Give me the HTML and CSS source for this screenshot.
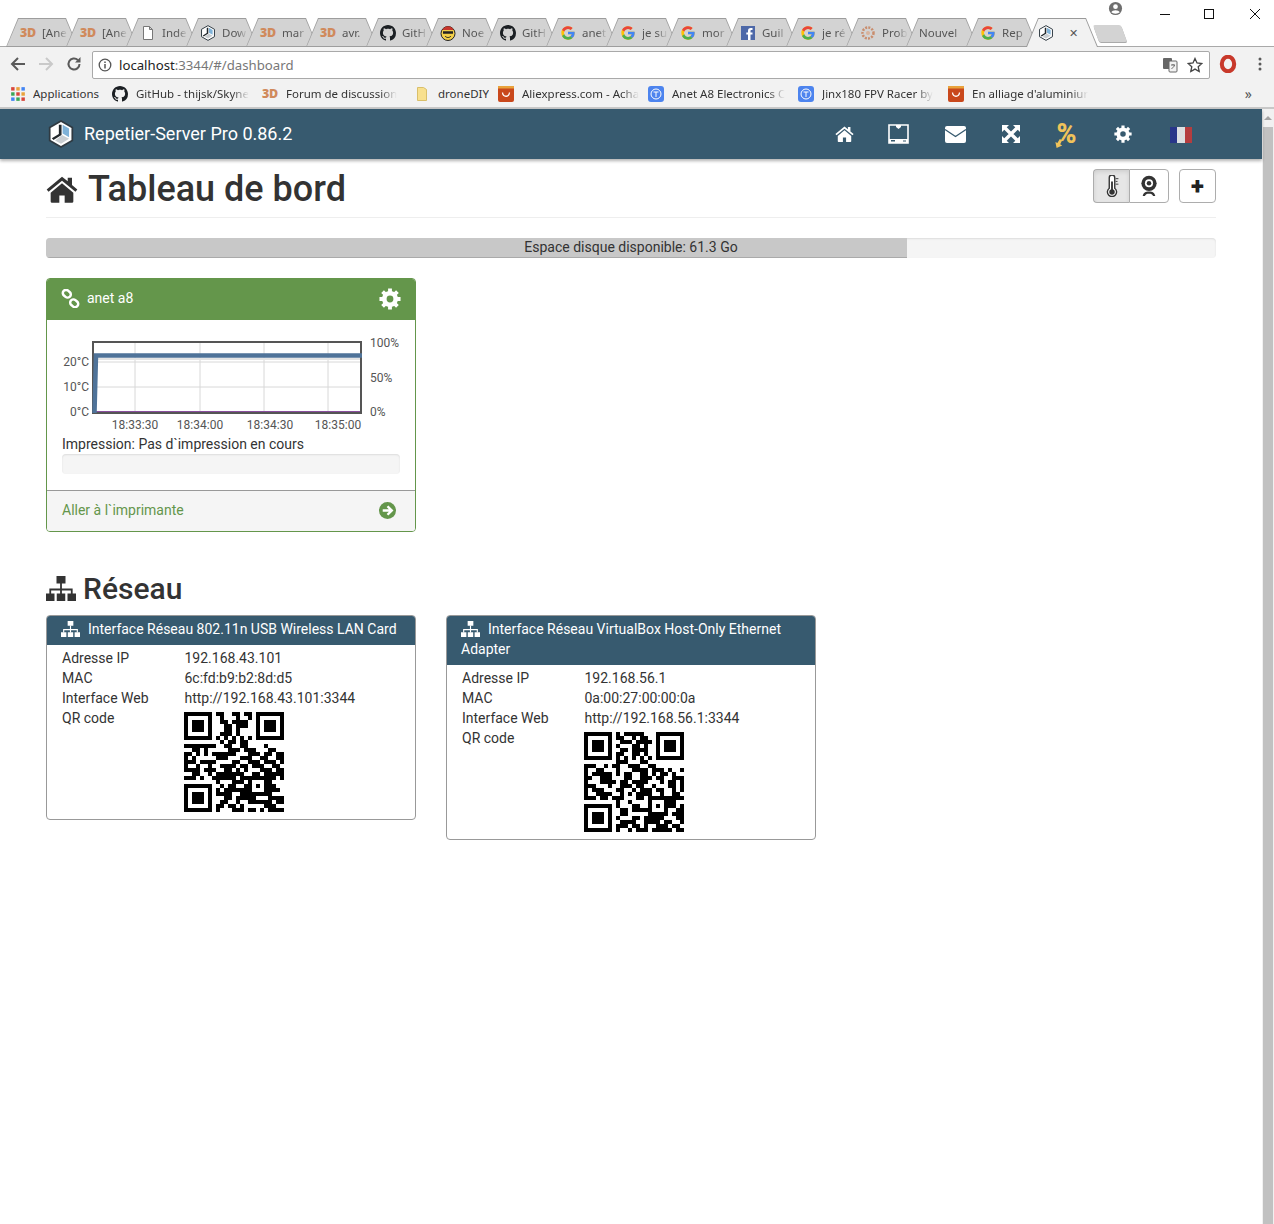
FILE: index.html
```html
<!DOCTYPE html>
<html lang="fr">
<head>
<meta charset="utf-8">
<title>Repetier-Server Pro</title>
<link rel="stylesheet" href="styles.css">
</head>
<body>
<svg class="defs" aria-hidden="true">
  <symbol id="g" viewBox="0 0 48 48">
    <path fill="#FFC107" d="M43.6 20.5H42V20H24v8h11.3C33.7 32.7 29.2 36 24 36c-6.6 0-12-5.4-12-12s5.4-12 12-12c3.1 0 5.8 1.2 8 3l5.7-5.7C34 6.1 29.3 4 24 4 13 4 4 13 4 24s9 20 20 20 20-9 20-20c0-1.2-.1-2.4-.4-3.5z"/>
    <path fill="#E8453C" d="M6.3 14.7l6.6 4.8C14.7 15.1 19 12 24 12c3.1 0 5.8 1.2 8 3l5.7-5.7C34 6.1 29.3 4 24 4 16.3 4 9.7 8.3 6.3 14.7z"/>
    <path fill="#4CAF50" d="M24 44c5.2 0 9.9-2 13.4-5.2l-6.2-5.2C29.2 35.1 26.7 36 24 36c-5.2 0-9.6-3.3-11.3-7.9l-6.5 5C9.5 39.6 16.2 44 24 44z"/>
    <path fill="#4285F4" d="M43.6 20.5H42V20H24v8h11.3c-.8 2.2-2.2 4.2-4.1 5.6l6.2 5.2C37 39.2 44 34 44 24c0-1.2-.1-2.4-.4-3.5z"/>
  </symbol>
  <symbol id="gh" viewBox="0 0 16 16">
    <path fill="#1b1f23" d="M8 0C3.58 0 0 3.58 0 8c0 3.54 2.29 6.53 5.47 7.59.4.07.55-.17.55-.38 0-.19-.01-.82-.01-1.49-2.01.37-2.53-.49-2.69-.94-.09-.23-.48-.94-.82-1.13-.28-.15-.68-.52-.01-.53.63-.01 1.08.58 1.23.82.72 1.21 1.87.87 2.33.66.07-.52.28-.87.51-1.07-1.78-.2-3.64-.89-3.64-3.95 0-.87.31-1.59.82-2.15-.08-.2-.36-1.02.08-2.12 0 0 .67-.21 2.2.82.64-.18 1.32-.27 2-.27.68 0 1.36.09 2 .27 1.53-1.04 2.2-.82 2.2-.82.44 1.1.16 1.92.08 2.12.51.56.82 1.27.82 2.15 0 3.07-1.87 3.75-3.65 3.95.29.25.54.73.54 1.48 0 1.07-.01 1.93-.01 2.2 0 .21.15.46.55.38A8.013 8.013 0 0016 8c0-4.42-3.58-8-8-8z"/>
  </symbol>
  <symbol id="repetier" viewBox="0 0 24 26">
    <path fill="#fff" stroke="#2f3a42" stroke-width="1.6" d="M12 1l10.5 6v12L12 25 1.5 19V7z"/>
    <path fill="#22282c" d="M10 4.5h2.5V14l-7.500 4.500-1.500-1.500L10 13z"/>
    <path fill="#7fb2d8" d="M13.500 4.500l6 3.500v8l-6-3.500z"/>
    <path fill="#c9ced2" d="M13 14l6.500 3.500L12 22l-5.500-3z"/>
  </symbol>
  <symbol id="cog" viewBox="0 0 24 24">
    <circle cx="12" cy="12" r="6.200" fill="none" stroke="currentColor" stroke-width="5"/>
    <path fill="none" stroke="currentColor" stroke-width="4.200" d="M12 .5v4M12 19.500v4M.5 12h4M19.500 12h4M3.900 3.900l2.800 2.800M17.300 17.300l2.800 2.800M3.900 20.100l2.800-2.800M17.300 6.700l2.800-2.800"/>
  </symbol>
  <symbol id="home" viewBox="0 0 24 20">
    <path fill="currentColor" d="M12 .5L.5 10l1.400 1.700L12 3.400l10.100 8.300 1.400-1.700-4-3.300V1.200h-3.200v2.700z"/>
    <path fill="currentColor" d="M12 5.400l-8.500 7V19a1 1 0 0 0 1 1H10v-5.500h4V20h5.500a1 1 0 0 0 1-1v-6.600z"/>
  </symbol>
  <symbol id="sitemap" viewBox="0 0 30 25">
    <path fill="currentColor" d="M10.500 0h9v7.500h-9zM0 17.500h8.500V25H0zM10.750 17.500h8.500V25h-8.500zM21.500 17.500H30V25h-8.500z"/>
    <path fill="none" stroke="currentColor" stroke-width="1.800" d="M15 7v11M4.250 18v-4.500h21.500V18"/>
  </symbol>
  <symbol id="t" viewBox="0 0 16 16">
    <rect width="16" height="16" rx="3" fill="#4d84ee"/>
    <circle cx="8" cy="8" r="5" fill="none" stroke="#fff"/>
    <path fill="none" stroke="#fff" d="M5.500 6h5M8 6v5"/>
  </symbol>
  <symbol id="ali" viewBox="0 0 16 16">
    <rect width="16" height="16" rx="2" fill="#c9481c"/>
    <rect width="16" height="2.500" fill="#e9a23b"/>
    <path fill="none" stroke="#fff" stroke-width="1.300" d="M4.500 6.500c.5 5 6.500 5 7 0"/>
  </symbol>
</svg>

<header class="chrome">
  <div class="tabstrip">
    <div class="tabs">
      <div class="tab"><span class="tab-inner"><span class="td">3D</span><span class="tab-text">[Ane</span></span></div>
      <div class="tab"><span class="tab-inner"><span class="td">3D</span><span class="tab-text">[Ane</span></span></div>
      <div class="tab"><span class="tab-inner"><svg class="fav" viewBox="0 0 16 16"><path fill="#fff" stroke="#777" d="M3.500 1.500h6l3 3v10h-9z M9.500 1.500v3h3"/></svg><span class="tab-text">Inde</span></span></div>
      <div class="tab"><span class="tab-inner"><svg class="fav"><use href="#repetier"/></svg><span class="tab-text">Dow</span></span></div>
      <div class="tab"><span class="tab-inner"><span class="td">3D</span><span class="tab-text">mar</span></span></div>
      <div class="tab"><span class="tab-inner"><span class="td">3D</span><span class="tab-text">avr.</span></span></div>
      <div class="tab"><span class="tab-inner"><svg class="fav"><use href="#gh"/></svg><span class="tab-text">GitH</span></span></div>
      <div class="tab"><span class="tab-inner"><svg class="fav" viewBox="0 0 16 16"><circle cx="8" cy="8.500" r="7" fill="#f2cf4a" stroke="#222"/><path fill="#c7352b" d="M2.500 5c2-5 9-5 11 0z"/><path stroke="#222" stroke-width="2.500" d="M3 7.500h10"/><path fill="none" stroke="#222" d="M5 11c1.500 2 4.500 2 6 0"/></svg><span class="tab-text">Noe</span></span></div>
      <div class="tab"><span class="tab-inner"><svg class="fav"><use href="#gh"/></svg><span class="tab-text">GitH</span></span></div>
      <div class="tab"><span class="tab-inner"><svg class="fav"><use href="#g"/></svg><span class="tab-text">anet</span></span></div>
      <div class="tab"><span class="tab-inner"><svg class="fav"><use href="#g"/></svg><span class="tab-text">je su</span></span></div>
      <div class="tab"><span class="tab-inner"><svg class="fav"><use href="#g"/></svg><span class="tab-text">mor</span></span></div>
      <div class="tab"><span class="tab-inner"><svg class="fav" viewBox="0 0 16 16"><rect x="1" y="1" width="14" height="14" fill="#4d68a8"/><path fill="#fff" d="M10.500 15V9.500h2V7.500h-2V6c0-.7.3-1 1-1h1V3h-1.500C8.700 3 8 4.200 8 5.700v1.800H6.300v2H8V15z"/></svg><span class="tab-text">Guil</span></span></div>
      <div class="tab"><span class="tab-inner"><svg class="fav"><use href="#g"/></svg><span class="tab-text">je ré</span></span></div>
      <div class="tab"><span class="tab-inner"><svg class="fav" viewBox="0 0 16 16"><circle cx="8" cy="8" r="5.500" fill="none" stroke="#c98d6d" stroke-width="2.500" stroke-dasharray="2 1.200"/><circle cx="8" cy="8" r="2" fill="#d9b39c"/></svg><span class="tab-text">Prob</span></span></div>
      <div class="tab"><span class="tab-inner tab-inner-plain"><span class="tab-text tab-text-wide">Nouvel</span></span></div>
      <div class="tab"><span class="tab-inner"><svg class="fav"><use href="#g"/></svg><span class="tab-text">Rep</span></span></div>
      <div class="tab tab-active"><span class="tab-inner"><svg class="fav"><use href="#repetier"/></svg><span class="tab-close">✕</span></span></div>
    </div>
    <div class="newtab"></div>
    <svg class="profile" viewBox="0 0 16 16"><circle cx="8" cy="8" r="7" fill="#6e6e6e"/><circle cx="8" cy="6" r="2.500" fill="#fff"/><path fill="#fff" d="M3.500 12c1-3 8-3 9 0-2 2-7 2-9 0z"/></svg>
    <div class="winctl">
      <svg class="winbtn" viewBox="0 0 10 10"><path stroke="#111" d="M0 5.500h10"/></svg>
      <svg class="winbtn" viewBox="0 0 10 10"><rect x=".5" y=".5" width="9" height="9" fill="none" stroke="#111"/></svg>
      <svg class="winbtn winbtn-close" viewBox="0 0 10 10"><path stroke="#111" d="M0 0l10 10M10 0L0 10"/></svg>
    </div>
  </div>
  <div class="toolbar">
    <svg class="tool" viewBox="0 0 16 16"><path fill="none" stroke="#5a5a5a" stroke-width="2" d="M15 8H2.500M8 2L2 8l6 6"/></svg>
    <svg class="tool" viewBox="0 0 16 16"><path fill="none" stroke="#c9c9c9" stroke-width="2" d="M1 8h12.500M8 2l6 6-6 6"/></svg>
    <svg class="tool" viewBox="0 0 16 16"><path fill="none" stroke="#5a5a5a" stroke-width="2" d="M13.500 8a5.500 5.500 0 1 1-1.700-4"/><path fill="#5a5a5a" d="M14.500 1v5.500H9z"/></svg>
    <div class="omnibox">
      <svg class="info" viewBox="0 0 14 14"><circle cx="7" cy="7" r="5.800" fill="none" stroke="#555" stroke-width="1.300"/><path stroke="#555" stroke-width="1.500" d="M7 6v4.500M7 3.500v1.500"/></svg>
      <span class="url">localhost<span class="url-path">:3344/#/dashboard</span></span>
      <svg class="translate" viewBox="0 0 16 16"><rect x="1" y="1" width="9" height="11" rx="1" fill="#666"/><rect x="7" y="4" width="8" height="11" rx="1" fill="#f2f2f2" stroke="#666"/><path stroke="#666" fill="none" d="M9 8h4M11 7v1M12.500 8c-.4 2-1.800 3-3 3.500"/></svg>
      <svg class="star" viewBox="0 0 16 16"><path fill="none" stroke="#444" stroke-width="1.300" d="M8 1.500l2 4.500 4.800.5-3.600 3.200 1 4.800L8 12.100 3.800 14.500l1-4.800L1.200 6.500 6 6z"/></svg>
    </div>
    <svg class="opera" viewBox="0 0 16 16"><ellipse cx="8" cy="8" rx="5.500" ry="6.500" fill="none" stroke="#c8392b" stroke-width="3.600"/></svg>
    <svg class="menu" viewBox="0 0 4 16"><circle cx="2" cy="3" r="1.500" fill="#5a5a5a"/><circle cx="2" cy="8" r="1.500" fill="#5a5a5a"/><circle cx="2" cy="13" r="1.500" fill="#5a5a5a"/></svg>
  </div>
  <div class="bookmarks">
    <div class="bm bm-apps"><svg class="fav" viewBox="0 0 14 14"><path fill="#d9453a" d="M1 1h3v3H1z"/><path fill="#e9a23b" d="M5.500 1h3v3h-3z"/><path fill="#4285f4" d="M10 1h3v3h-3z"/><path fill="#3aa757" d="M1 5.500h3v3H1z"/><path fill="#d9453a" d="M5.500 5.500h3v3h-3z"/><path fill="#e9a23b" d="M10 5.500h3v3h-3z"/><path fill="#4285f4" d="M1 10h3v3H1z"/><path fill="#3aa757" d="M5.500 10h3v3h-3z"/><path fill="#d9453a" d="M10 10h3v3h-3z"/></svg><span class="bm-text">Applications</span></div>
    <div class="bm"><svg class="fav"><use href="#gh"/></svg><span class="bm-text">GitHub - thijsk/Skyne</span></div>
    <div class="bm bm-3d"><span class="td">3D</span><span class="bm-text">Forum de discussion</span></div>
    <div class="bm bm-folder"><svg class="fav" viewBox="0 0 16 16"><path fill="#f8e08e" stroke="#d9bf6a" d="M3.500 1.500h6l3 2v11h-9z"/></svg><span class="bm-text">droneDIY</span></div>
    <div class="bm"><svg class="fav"><use href="#ali"/></svg><span class="bm-text">Aliexpress.com - Acha</span></div>
    <div class="bm"><svg class="fav"><use href="#t"/></svg><span class="bm-text">Anet A8 Electronics C</span></div>
    <div class="bm"><svg class="fav"><use href="#t"/></svg><span class="bm-text">Jinx180 FPV Racer by</span></div>
    <div class="bm"><svg class="fav"><use href="#ali"/></svg><span class="bm-text">En alliage d'aluminiur</span></div>
    <span class="bm-more">»</span>
  </div>
</header>

<div class="page">
  <div class="viewport">
    <nav class="navbar">
      <div class="brand"><svg class="brand-logo"><use href="#repetier"/></svg><span>Repetier-Server Pro 0.86.2</span></div>
      <ul class="navicons">
        <li><svg class="ic-home"><use href="#home"/></svg></li>
        <li><svg class="ic-printer" viewBox="0 0 21 20"><path fill="none" stroke="#fff" stroke-width="1.600" d="M1 1h19v18H1z"/><path fill="#fff" d="M8 1h5v2l-2.500 2L8 3zM1 15h19v4H1z"/><path fill="#375a6f" d="M3 16h4v1.500H3zM15 16.500h3v1h-3z"/></svg></li>
        <li><svg class="ic-mail" viewBox="0 0 21 17"><rect width="21" height="17" rx="2" fill="#fff"/><path fill="none" stroke="#375a6f" stroke-width="1.300" d="M0 3.500l10.500 7 10.500-7"/></svg></li>
        <li><svg class="ic-expand" viewBox="0 0 18 18"><path fill="#fff" d="M0 0h7L0 7zM18 0v7l-7-7zM0 18v-7l7 7zM18 18h-7l7-7z"/><path fill="none" stroke="#fff" stroke-width="3.400" d="M2.500 2.500l13 13M15.500 2.500l-13 13"/></svg></li>
        <li class="nav-percent">%<svg class="percent-arrow" viewBox="0 0 10 11"><path fill="#f0c35a" d="M6 0l3 1.500-2.500 5 2.500 1.500-7 3-1.500-7.500 2.500 1.500z"/></svg></li>
        <li><svg class="ic-cog"><use href="#cog"/></svg></li>
        <li><span class="flag"></span></li>
      </ul>
    </nav>
    <main class="content">
      <div class="pagehead">
        <h1><svg class="h1-icon"><use href="#home"/></svg>Tableau de bord</h1>
        <div class="head-actions">
          <div class="btn-group">
            <button class="btn btn-on"><svg class="btn-ic" viewBox="0 0 18 24"><path fill="#fff" stroke="#333" stroke-width="1.500" d="M6 3a3 3 0 0 1 6 0v11.500a5 5 0 1 1-6 0z"/><circle cx="9" cy="18.500" r="3" fill="#333"/><path stroke="#333" stroke-width="2" d="M9 7v11"/><path stroke="#333" d="M13 4h3M13 7h2M13 10h3"/></svg></button>
            <button class="btn"><svg class="btn-ic" viewBox="0 0 20 24"><circle cx="10" cy="9" r="8.500" fill="#333"/><circle cx="10" cy="9" r="4.500" fill="#fff"/><circle cx="10" cy="9" r="2.500" fill="#333"/><path fill="#333" d="M3 23c1-4 3-5 7-5s6 1 7 5h-2.500c-.7-2-2-2.500-4.500-2.500S6.200 21 5.500 23z"/></svg></button>
          </div>
          <button class="btn btn-plus">+</button>
        </div>
      </div>
      <div class="progress disk"><div class="progress-bar"></div><span class="progress-label">Espace disque disponible: 61.3 Go</span></div>

      <section class="printer card card-green">
        <div class="card-head green-head">
          <svg class="ic-link" viewBox="0 0 18 18"><g fill="none" stroke="#fff" stroke-width="2.400"><rect x="1.500" y="1.500" width="8" height="6" rx="3" transform="rotate(40 5.500 4.500)"/><rect x="8.500" y="10.500" width="8" height="6" rx="3" transform="rotate(40 12.500 13.500)"/></g></svg>
          <span class="printer-name">anet a8</span>
          <svg class="ic-cog-head"><use href="#cog"/></svg>
        </div>
        <div class="card-body">
          <svg class="chart" viewBox="0 0 338 100">
            <path class="grid" d="M73 8v72M138 8v72M202 8v72M266 8v72M31 29h269M31 54h269"/>
            <path class="line-shadow" d="M35 26h265"/>
            <path class="line-purple" d="M31 79h269"/>
            <rect class="plot" x="31" y="9" width="268" height="71"/>
            <path class="line-blue" d="M32.500 80L34 22.500H300"/>
            <text class="tick tick-end" x="27" y="33">20°C</text>
            <text class="tick tick-end" x="27" y="58">10°C</text>
            <text class="tick tick-end" x="27" y="83">0°C</text>
            <text class="tick" x="308" y="14">100%</text>
            <text class="tick" x="308" y="49">50%</text>
            <text class="tick" x="308" y="83">0%</text>
            <text class="tick tick-mid" x="73" y="96">18:33:30</text>
            <text class="tick tick-mid" x="138" y="96">18:34:00</text>
            <text class="tick tick-mid" x="208" y="96">18:34:30</text>
            <text class="tick tick-mid" x="276" y="96">18:35:00</text>
          </svg>
          <div class="print-state">Impression: Pas d`impression en cours</div>
          <div class="progress job"></div>
        </div>
        <div class="card-foot">
          <span>Aller à l`imprimante</span>
          <svg class="ic-go" viewBox="0 0 16 16"><circle cx="8" cy="8" r="8" fill="#64964b"/><path fill="none" stroke="#fff" stroke-width="2.300" d="M3.500 8h8M8 4l4 4-4 4"/></svg>
        </div>
      </section>

      <h2><svg class="h2-icon"><use href="#sitemap"/></svg>Réseau</h2>
      <div class="nets">
        <section class="card card-net">
          <div class="net-head"><svg class="net-ic"><use href="#sitemap"/></svg>Interface Réseau 802.11n USB Wireless LAN Card</div>
          <dl class="net-body">
            <dt>Adresse IP</dt><dd>192.168.43.101</dd>
            <dt>MAC</dt><dd>6c:fd:b9:b2:8d:d5</dd>
            <dt>Interface Web</dt><dd>http://192.168.43.101:3344</dd>
            <dt>QR code</dt>
            <dd><svg class="qr" viewBox="0 0 25 25" shape-rendering="crispEdges"><path stroke="#000" d="M0 .5h7m1 0h2m2 0h2m1 0h2m1 0h7M0 1.500h1m5 0h1m2 0h1m3 0h1m2 0h1m1 0h1m5 0h1M0 2.500h1m1 0h3m1 0h1m2 0h2m1 0h4m2 0h1m1 0h3m1 0h1M0 3.500h1m1 0h3m1 0h1m3 0h2m1 0h3m2 0h1m1 0h3m1 0h1M0 4.500h1m1 0h3m1 0h1m3 0h2m1 0h1m4 0h1m1 0h3m1 0h1M0 5.500h1m5 0h1m2 0h3m1 0h1m4 0h1m5 0h1M0 6.500h7m1 0h1m1 0h1m1 0h1m1 0h1m1 0h1m1 0h7M9 7.500h1m1 0h2m1 0h2M0 8.500h8m2 0h2m2 0h2m4 0h1M2 9.500h2m1 0h1m5 0h3m1 0h3m3 0h2M0 10.500h2m1 0h1m1 0h1m1 0h6m3 0h3m1 0h2m1 0h2M0 11.500h1m1 0h1m5 0h3m3 0h3m2 0h2m2 0h2M0 12.500h3m1 0h4m4 0h2m2 0h3m1 0h3m1 0h1M0 13.500h1m2 0h1m2 0h1m2 0h4m1 0h2m1 0h3m2 0h2M0 14.500h4m1 0h3m2 0h2m1 0h1m1 0h1m3 0h3m1 0h2M2 15.500h2m2 0h1m1 0h7m2 0h2m1 0h5M0 16.500h3m1 0h1m2 0h6m1 0h9m1 0h1M8 17.500h1m3 0h3m1 0h1m3 0h2M0 18.500h7m2 0h1m1 0h2m2 0h2m1 0h1m1 0h3M0 19.500h1m5 0h1m1 0h1m1 0h7m3 0h4M0 20.500h1m1 0h3m1 0h1m1 0h4m2 0h8M0 21.500h1m1 0h3m1 0h1m3 0h2m1 0h5m3 0h4M0 22.500h1m1 0h3m1 0h1m2 0h2m2 0h1m2 0h6m1 0h2M0 23.500h1m5 0h1m1 0h2m1 0h2m1 0h1m5 0h3M0 24.500h7m1 0h1m3 0h3m1 0h2m1 0h1m1 0h4"/></svg></dd>
          </dl>
        </section>
        <section class="card card-net">
          <div class="net-head"><svg class="net-ic"><use href="#sitemap"/></svg>Interface Réseau VirtualBox Host-Only Ethernet Adapter</div>
          <dl class="net-body">
            <dt>Adresse IP</dt><dd>192.168.56.1</dd>
            <dt>MAC</dt><dd>0a:00:27:00:00:0a</dd>
            <dt>Interface Web</dt><dd>http://192.168.56.1:3344</dd>
            <dt>QR code</dt>
            <dd><svg class="qr" viewBox="0 0 25 25" shape-rendering="crispEdges"><path stroke="#000" d="M0 .5h7m1 0h1m1 0h5m3 0h7M0 1.500h1m5 0h1m1 0h2m2 0h1m1 0h2m2 0h1m5 0h1M0 2.500h1m1 0h3m1 0h1m2 0h3m1 0h4m1 0h1m1 0h3m1 0h1M0 3.500h1m1 0h3m1 0h1m1 0h1m3 0h2m1 0h1m2 0h1m1 0h3m1 0h1M0 4.500h1m1 0h3m1 0h1m2 0h2m1 0h4m2 0h1m1 0h3m1 0h1M0 5.500h1m5 0h1m1 0h2m2 0h2m1 0h1m2 0h1m5 0h1M0 6.500h7m1 0h1m1 0h1m1 0h1m1 0h1m1 0h1m1 0h7M8 7.500h3m3 0h2M0 8.500h3m2 0h1m1 0h2m2 0h3m2 0h2M0 9.500h1m2 0h2m3 0h1m3 0h4m1 0h3m1 0h1m2 0h1M0 10.500h1m1 0h5m1 0h1m1 0h2m2 0h2m1 0h1m1 0h2m1 0h1m2 0h1M0 11.500h2m2 0h3m3 0h2m2 0h3m1 0h2m2 0h3M0 12.500h1m3 0h4m1 0h2m1 0h4m3 0h1m1 0h2m1 0h1M0 13.500h3m3 0h1m2 0h3m1 0h2m2 0h1m3 0h2m1 0h1M0 14.500h1m1 0h3m3 0h2m2 0h1m1 0h3m1 0h2m2 0h1m1 0h1M0 15.500h1m2 0h4m2 0h1m1 0h1m1 0h4m2 0h1m2 0h2M0 16.500h3m1 0h2m1 0h3m3 0h2m1 0h9M8 17.500h1m2 0h1m4 0h1m3 0h3M0 18.500h7m1 0h1m3 0h2m2 0h1m1 0h1m1 0h3m1 0h1M0 19.500h1m5 0h1m2 0h2m1 0h5m3 0h1m2 0h2M0 20.500h1m1 0h3m1 0h1m2 0h2m5 0h5m1 0h3M0 21.500h1m1 0h3m1 0h1m1 0h1m3 0h2m1 0h5m3 0h2M0 22.500h1m1 0h3m1 0h1m2 0h4m2 0h4m1 0h2m2 0h1M0 23.500h1m5 0h1m1 0h3m1 0h2m1 0h1m2 0h3m1 0h2M0 24.500h7m1 0h1m2 0h1m1 0h3m1 0h5m1 0h2"/></svg></dd>
          </dl>
        </section>
      </div>
    </main>
  </div>
  <div class="scrollbar"><span class="scroll-arrow"></span><div class="scroll-thumb"></div></div>
</div>
</body>
</html>
```

FILE: styles.css
```css
* { box-sizing: border-box; }
html, body { margin: 0; height: 1224px; overflow: hidden; }
body { background: #fff; color: #333; font-family: Roboto, sans-serif; font-size: 14px; line-height: 20px; }
.defs { display: none; }

/* browser chrome */
.chrome { height: 109px; font-family: "Noto Sans", "Open Sans", sans-serif; border-bottom: 2px solid #c8c8c8; background: #f2f2f2; }
.tabstrip { height: 47px; display: flex; background: #fff; padding-left: 6px; border-bottom: 1px solid #a9a9a9; }
.tabs { display: flex; align-self: flex-end; height: 29px; margin-bottom: -1px; }
.tab { width: 72px; height: 29px; margin-right: -12px; background: #9d9d9d; clip-path: polygon(0 100%, 12px 0, 60px 0, 72px 100%); position: relative; }
.tab-inner { position: absolute; inset: 1px 1px 1px 1px; background: #d3d3d3; clip-path: polygon(0 100%, 11.500px 0, 58.500px 0, 70px 100%); display: flex; align-items: center; padding: 0 0 0 13px; gap: 6px; color: #555; font-size: 11.500px; white-space: nowrap; }
.tab-inner-plain { padding-left: 12px; }
.tab-text { display: block; width: 27px; overflow: hidden; -webkit-mask-image: linear-gradient(90deg, #000 55%, transparent 95%); mask-image: linear-gradient(90deg, #000 55%, transparent 95%); }
.tab-text-wide { width: 44px; -webkit-mask-image: linear-gradient(90deg, #000 80%, transparent); mask-image: linear-gradient(90deg, #000 80%, transparent); }
.tab-active { background: #9a9a9a; z-index: 2; }
.tab-active .tab-inner { background: #f2f2f2; inset: 1px 1px 0 1px; padding-left: 11px; }
.tab-close { margin-left: 9px; font-size: 11px; color: #555; }
.fav { width: 16px; height: 16px; flex: none; display: block; }
.td { width: 16px; flex: none; font-family: "Open Sans", sans-serif; font-weight: 800; font-size: 12.500px; letter-spacing: -.3px; color: #d08a5c; }
.newtab { width: 28px; height: 17px; margin: 25px 0 0 10px; background: #d3d3d3; border-radius: 2px; transform: skewX(20deg); box-shadow: 0 1px 0 #aaa; }
.profile { width: 15px; height: 15px; margin: 1px 0 0 -16px; flex: none; }
.winctl { display: flex; margin-left: auto; padding: 9px 14px 0 0; gap: 34px; height: 20px; }
.winbtn { width: 10px; height: 10px; }
.winbtn-close { margin-left: 2px; }
.toolbar { height: 34px; display: flex; align-items: center; padding-left: 10px; background: #f2f2f2; }
.tool { width: 16px; height: 16px; margin-right: 12px; flex: none; }
.omnibox { width: 1118px; height: 28px; margin: 1px 0 0 -2px; display: flex; align-items: center; background: #fff; border: 1px solid #a9a9a9; border-radius: 2px; padding: 0 6px 0 5px; font-size: 13.200px; }
.info { width: 14px; height: 14px; margin-right: 7px; }
.url { color: #222; }
.url-path { color: #777; }
.translate { width: 16px; height: 16px; margin-left: auto; }
.star { width: 16px; height: 16px; margin-left: 9px; }
.opera { width: 18px; height: 18px; margin-left: 9px; flex: none; }
.menu { width: 4px; height: 16px; margin-left: 21px; flex: none; }
.bookmarks { height: 26px; display: flex; align-items: center; padding-left: 10px; font-size: 11.500px; color: #333; background: #f2f2f2; white-space: nowrap; position: relative; }
.bm { display: flex; align-items: center; gap: 8px; width: 150px; flex: none; }
.bm-apps { width: 102px; gap: 7px; }
.bm-3d { width: 152px; }
.bm-folder { width: 84px; }
.bm-text { display: block; overflow: hidden; max-width: 118px; -webkit-mask-image: linear-gradient(90deg, #000 85%, transparent); mask-image: linear-gradient(90deg, #000 85%, transparent); }
.bm-apps .bm-text, .bm-folder .bm-text { -webkit-mask-image: none; mask-image: none; }
.bm-more { position: absolute; right: 22px; top: 0; font-size: 14px; line-height: 26px; color: #555; }

/* page */
.page { display: flex; height: 1115px; }
.viewport { width: 1262px; flex: none; }
.scrollbar { width: 12px; background: #f1f1f1; flex: none; display: flex; flex-direction: column; align-items: center; }
.scroll-arrow { margin: 7px 0 4px; width: 0; height: 0; border: 4px solid transparent; border-top: 0; border-bottom-color: #a3a3a3; }
.scroll-thumb { flex: 1; width: 10px; margin-top: 3px; background: #c1c1c1; }

.navbar { height: 50px; background: #375a6f; color: #fff; display: flex; align-items: center; justify-content: space-between; padding: 0 52px 0 48px; box-shadow: 0 2px 3px rgba(0,0,0,.3); position: relative; }
.brand { display: flex; align-items: center; gap: 10px; font-size: 18px; }
.brand-logo { width: 26px; height: 28px; }
.navicons { display: flex; list-style: none; margin: 0; padding: 0; }
.navicons li { display: flex; justify-content: center; align-items: center; height: 50px; width: 55.500px; position: relative; }
.navicons li:nth-child(1) { width: 54px; }
.navicons li:nth-child(2) { width: 55.750px; }
.navicons li:nth-child(3) { width: 57px; }
.navicons li:nth-child(4) { width: 55px; }
.navicons li:nth-child(6) { width: 57.750px; }
.navicons li:nth-child(7) { width: 58px; }
.ic-home { width: 19px; height: 16px; }
.ic-printer { width: 21px; height: 20px; }
.ic-mail { width: 21px; height: 17px; }
.ic-expand { width: 18px; height: 18px; }
.ic-cog { width: 18px; height: 18px; }
.nav-percent { color: #f0c35a; font-size: 27px; font-weight: 900; }
.percent-arrow { position: absolute; left: 16px; top: 30px; width: 8px; height: 9px; }
.flag { display: block; width: 22px; height: 16px; margin-top: 2px; background: linear-gradient(90deg, #26328c 0 33%, #eee 33% 66%, #c23a3a 66%); opacity: .9; }

.content { padding: 0 46px; }
.pagehead { display: flex; justify-content: space-between; align-items: flex-start; height: 59px; padding-top: 10px; border-bottom: 1px solid #eee; }
h1 { margin: 0; font-size: 36px; line-height: 40px; font-weight: 500; display: flex; align-items: center; gap: 10px; }
.h1-icon { width: 32px; height: 27px; color: #333; }
.head-actions { display: flex; gap: 10px; }
.btn-group { display: flex; }
.btn { height: 34px; width: 40px; background: #fff; border: 1px solid #adadad; border-radius: 4px; padding: 0; display: flex; align-items: center; justify-content: center; font-family: Roboto, sans-serif; }
.btn-group .btn:first-child { width: 36px; border-radius: 4px 0 0 4px; border-right: 0; }
.btn-group .btn:last-child { border-radius: 0 4px 4px 0; }
.btn-on { background: #e6e6e6; box-shadow: inset 0 2px 4px rgba(0,0,0,.1); }
.btn-ic { width: 18px; height: 22px; }
.btn-plus { width: 37px; font-size: 24px; font-weight: 900; color: #222; }

.progress { position: relative; height: 20px; background: #f5f5f5; border-radius: 4px; box-shadow: inset 0 1px 2px rgba(0,0,0,.1); overflow: hidden; }
.disk { margin-top: 20px; }
.progress-bar { width: 861px; height: 100%; background: #c8c8c8; box-shadow: inset 0 -1px 0 rgba(0,0,0,.15); }
.progress-label { position: absolute; inset: 0; text-align: center; line-height: 18px; }

.card { background: #fff; border: 1px solid #999; border-radius: 4px; width: 370px; overflow: hidden; }
.card-green { border-color: #64964b; margin-top: 20px; }
.card-head { display: flex; align-items: center; }
.green-head { height: 41px; background: #64964b; color: #fff; padding: 0 14px 2px; }
.ic-link { width: 19px; height: 19px; }
.printer-name { margin: 0 0 2px 7px; }
.ic-cog-head { width: 22px; height: 22px; margin-left: auto; color: #fff; }
.card-body { padding: 13px 15px 16px; }
.chart { display: block; width: 338px; height: 100px; }
.grid { fill: none; stroke: #d8d8d8; stroke-width: 1; }
.plot { fill: none; stroke: #555; stroke-width: 2; }
.line-blue { fill: none; stroke: #4f7399; stroke-width: 4.500; }
.line-shadow { fill: none; stroke: #e4e4e4; stroke-width: 2; }
.line-purple { fill: none; stroke: #8a4f9e; stroke-width: 2; }
.tick { font: 12px Roboto, sans-serif; fill: #555; }
.tick-end { text-anchor: end; }
.tick-mid { text-anchor: middle; }
.print-state { margin-top: 1px; }
.job { height: 20px; }
.card-foot { height: 41px; display: flex; align-items: center; justify-content: space-between; padding: 0 19px 2px 15px; background: #f5f5f5; border-top: 1px solid #999; color: #64964b; }
.ic-go { width: 17px; height: 17px; }

h2 { margin: 40px 0 0; font-size: 30px; line-height: 33px; font-weight: 500; display: flex; align-items: center; gap: 7px; height: 33px; }
.h2-icon { width: 30px; height: 25px; color: #333; }
.nets { display: flex; align-items: flex-start; gap: 30px; margin-top: 10px; }
.net-head { background: #375a6f; color: #fff; padding: 4px 15px 6px; margin: -1px -1px 0; }
.net-ic { width: 19px; height: 16px; vertical-align: -3px; margin-right: 8px; }
.card-net { border-color: #999; }
.net-body { display: grid; grid-template-columns: 122.500px 1fr; margin: 0; padding: 3px 15px 7px; }
.net-body dt, .net-body dd { margin: 0; }
.qr { display: block; width: 100px; height: 100px; margin: 4px 0 0 -1px; }
```
